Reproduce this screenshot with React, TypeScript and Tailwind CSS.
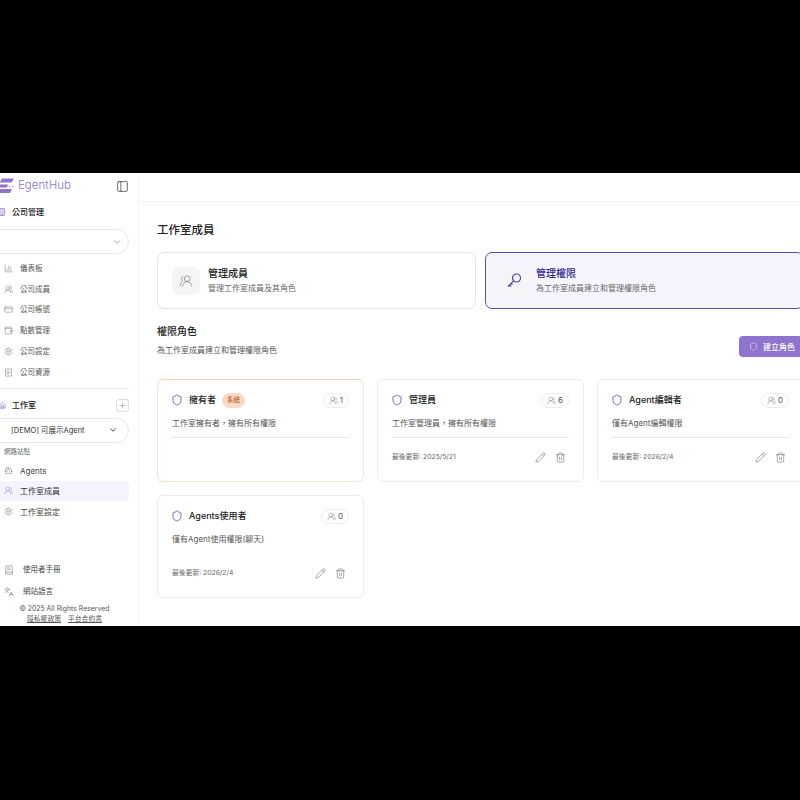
import { Bot, BookText, Building, ChartColumn, ChevronDown, CreditCard, House, Languages, PanelLeft, Pencil, Plus, ReceiptText, Settings, Shield, Trash2, UsersRound, Wallet } from "lucide-react";
import type { ReactNode } from "react";

const fontStack = "font-['Inter','Noto_Sans_CJK_TC',sans-serif]";

const companyLinks = [
  { label: "儀表板", icon: <ChartColumn size={9} strokeWidth={1} /> },
  { label: "公司成員", icon: <UsersRound size={9} strokeWidth={1} /> },
  { label: "公司帳號", icon: <CreditCard size={9} strokeWidth={1} /> },
  { label: "點數管理", icon: <Wallet size={9} strokeWidth={1} /> },
  { label: "公司設定", icon: <Settings size={9} strokeWidth={1} /> },
  { label: "公司資源", icon: <ReceiptText size={9} strokeWidth={1} /> },
];

const roles = [
  { name: "擁有者", desc: "工作室擁有者，擁有所有權限", count: 1, system: true },
  { name: "管理員", desc: "工作室管理員，擁有所有權限", count: 6, updated: "最後更新: 2025/5/21" },
  { name: "Agent編輯者", desc: "僅有Agent編輯權限", count: 0, updated: "最後更新: 2026/2/4" },
  { name: "Agents使用者", desc: "僅有Agent使用權限(聊天)", count: 0, updated: "最後更新: 2026/2/4", noDivider: true },
];

const Logo = () => (
  <svg width="20" height="16" viewBox="0 0 20 16" className="shrink-0 text-[#8f73c9]">
    <path d="M5 .5h12l-2.500 4H2.500zM3 6.500h8l-1 3H3zM3 11h12l-2 4H.5z" fill="currentColor" />
    <path d="M12 7.500h1.500l-.4 2h-1.500zM15 7.500h1.500l-.4 2h-1.500z" fill="currentColor" opacity=".6" />
  </svg>
);

const WorkspaceRow = ({ icon, label, active }: { icon: ReactNode; label: string; active?: boolean }) => (
  <div className={`flex h-[20px] items-center gap-[7px] rounded-r-[4px] pl-[4px] text-[8px] ${active ? "bg-[#f5f3fd] text-[#333]" : "text-[#444]"}`}>
    <span className={active ? "text-[#7a5fc0]" : "text-[#444]"}>{icon}</span>
    {label}
  </div>
);

const Sidebar = () => (
  <aside className="flex w-[139px] shrink-0 flex-col border-r border-[#f7f7f8] pr-[9px]">
    <div className="flex h-[25px] items-center justify-between pt-[1px]">
      <div className="-ml-[3px] flex items-center gap-[1px]">
        <Logo />
        <span className="text-[11.500px] font-light text-[#8f73c9]">EgentHub</span>
      </div>
      <PanelLeft size={13} strokeWidth={1.2} className="text-[#222]" />
    </div>

    <div className="mt-[7px] flex h-[14px] items-center gap-[6px] text-[8px] font-medium text-[#222]">
      <Building size={8} strokeWidth={2} className="-ml-[2px] text-[#7a5fc0]" />
      公司管理
    </div>
    <div className="mt-[10px] -ml-[14px] flex h-[25px] items-center justify-end rounded-full border border-[#e6e6e8] pr-[6px]">
      <ChevronDown size={10} strokeWidth={1.2} className="text-[#555]" />
    </div>

    <nav className="mt-[4px] flex flex-col">
      {companyLinks.map((item) => (
        <div key={item.label} className="flex h-[20.800px] items-center gap-[7px] pl-[4px] text-[7.500px] text-[#555]">
          <span className="text-[#444]">{item.icon}</span>
          {item.label}
        </div>
      ))}
    </nav>

    <div className="mt-[5px] border-t border-[#ececee]" />

    <div className="mt-[10px] flex items-center justify-between">
      <div className="flex items-center gap-[6px] text-[8px] font-medium text-[#222]">
        <House size={7} className="-ml-[1px] text-[#7a5fc0]" />
        工作室
      </div>
      <div className="flex size-[13px] items-center justify-center rounded-[3px] border border-[#ddd] text-[#555]">
        <Plus size={9} strokeWidth={1} />
      </div>
    </div>
    <div className="mt-[6px] -ml-[14px] flex h-[25px] items-center justify-between rounded-full border border-[#e6e6e8] pl-[24px] pr-[10px] text-[7.500px] text-[#333]">
      [DEMO] 可展示Agent
      <ChevronDown size={10} className="text-[#222]" />
    </div>
    <div className="mt-[5px] pl-[4px] text-[6.500px] text-[#666]">網路站點</div>

    <div className="mt-[3px] flex flex-col">
      <WorkspaceRow icon={<Bot size={9} strokeWidth={1} />} label="Agents" />
      <WorkspaceRow active icon={<UsersRound size={9} strokeWidth={1} />} label="工作室成員" />
      <div className="mt-[1px]">
        <WorkspaceRow icon={<Settings size={9} strokeWidth={1} />} label="工作室設定" />
      </div>
    </div>

    <div className="mt-auto flex flex-col">
      <div className="flex h-[22px] items-center gap-[9px] pl-[4px] text-[7.500px] text-[#444]">
        <BookText size={10} strokeWidth={1} />
        使用者手冊
      </div>
      <div className="flex h-[22px] items-center gap-[9px] pl-[4px] text-[7.500px] text-[#444]">
        <Languages size={10} strokeWidth={1} />
        網站語言
      </div>
      <div className="mt-[1px] text-center text-[6.900px] leading-[10px] text-[#555]">© 2025 All Rights Reserved</div>
      <div className="mb-[3px] flex justify-center gap-[7px] text-[6.800px] leading-[9px] text-[#555] underline">
        <span>隱私權政策</span>
        <span>平台合約書</span>
      </div>
    </div>
  </aside>
);

const TabCard = ({ title, desc, icon, active }: { title: string; desc: string; icon: ReactNode; active?: boolean }) => (
  <div className={`flex h-[57px] items-center gap-[8px] rounded-[7px] border pl-[14px] ${active ? "border-[#5b4db0] bg-[#f6f5fe]" : "border-[#e4e4e7] bg-white"}`}>
    <div className="flex size-[28px] items-center justify-center rounded-[6px] bg-[#f5f5f5]">{icon}</div>
    <div className="-mt-[2px]">
      <div className={`text-[10px] font-medium leading-[14px] ${active ? "text-[#31268f]" : "text-[#222]"}`}>{title}</div>
      <div className="mt-[2px] text-[8px] leading-[12px] text-[#666]">{desc}</div>
    </div>
  </div>
);

const RoleCard = ({ role }: { role: (typeof roles)[number] }) => (
  <div className={`flex h-[103px] flex-col rounded-[6px] border px-[14px] pt-[12px] ${role.system ? "border-[#f5e6d3] border-t-[#eed6b4]" : "border-[#ececee]"}`}>
    <div className="flex h-[16px] items-center justify-between">
      <div className="flex items-center gap-[6px]">
        <Shield size={12} strokeWidth={1.5} className="-ml-[1px] text-[#4a3fb0]" />
        <span className="text-[9px] font-medium text-[#222]">{role.name}</span>
        {role.system && <span className="rounded-full bg-[#fbd9c5] px-[5px] py-[3px] text-[6.500px] leading-[9px] text-[#a64b14]">系統</span>}
      </div>
      <div className="flex h-[15px] items-center gap-[2px] rounded-full border border-[#ececee] px-[5px] text-[8px] text-[#555]">
        <UsersRound size={9} strokeWidth={1} />
        {role.count}
      </div>
    </div>
    <div className="mt-[9px] text-[8px] leading-[12px] text-[#555]">{role.desc}</div>
    <div className={`mt-[8px] border-t ${role.noDivider ? "border-transparent" : "border-[#e8e8ea]"}`} />
    {role.updated && (
      <div className="mt-[14px] flex items-center justify-between pr-[3px]">
        <span className="text-[6.800px] text-[#666]">{role.updated}</span>
        <div className="flex items-center gap-[9px] text-[#444]">
          <Pencil size={11} strokeWidth={1} />
          <Trash2 size={11} strokeWidth={1} />
        </div>
      </div>
    )}
  </div>
);

export default function App() {
  return (
    <div className={`flex h-screen w-full items-start overflow-hidden bg-black ${fontStack}`}>
      <div className="mt-[173px] flex h-[453px] w-[813px] shrink-0 bg-white">
        <Sidebar />
        <main className="flex min-w-0 flex-1 flex-col">
          <div className="h-[29px] border-b border-[#f3f3f5]" />
          <div className="pl-[18px] pr-[9px]">
            <h1 className="mt-[20px] text-[11.500px] font-medium leading-[17px] text-[#222]">工作室成員</h1>
            <div className="mt-[13px] grid grid-cols-2 gap-[9px]">
              <TabCard title="管理成員" desc="管理工作室成員及其角色" icon={<UsersRound size={14} strokeWidth={0.9} className="-scale-x-100 text-[#555]" />} />
              <TabCard
                active
                title="管理權限"
                desc="為工作室成員建立和管理權限角色"
                icon={
                  <svg width="17" height="17" viewBox="0 0 17 17" fill="none" stroke="#4a3fb0" strokeWidth="1.2">
                    <circle cx="10.500" cy="6" r="4" />
                    <path d="M7.600 8.800 2 14.500M3.500 13l1.700 1.700M5.200 11.300l1.300 1.300" />
                  </svg>
                }
              />
            </div>
            <div className="flex items-end justify-between">
              <div>
                <h2 className="mt-[15px] text-[10px] font-medium leading-[14px] text-[#222]">權限角色</h2>
                <p className="mt-[6px] text-[8px] leading-[12px] text-[#555]">為工作室成員建立和管理權限角色</p>
              </div>
              <button className="-mr-[1px] -mb-[1px] flex h-[21px] items-center gap-[5px] rounded-[4px] bg-[#8f73cf] px-[10px] text-[8px] font-medium text-white">
                <Shield size={9} strokeWidth={1.2} />
                建立角色
              </button>
            </div>
            <div className="mt-[23px] grid grid-cols-3 gap-[13px]">
              {roles.map((role) => (
                <RoleCard key={role.name} role={role} />
              ))}
            </div>
          </div>
        </main>
      </div>
    </div>
  );
}
